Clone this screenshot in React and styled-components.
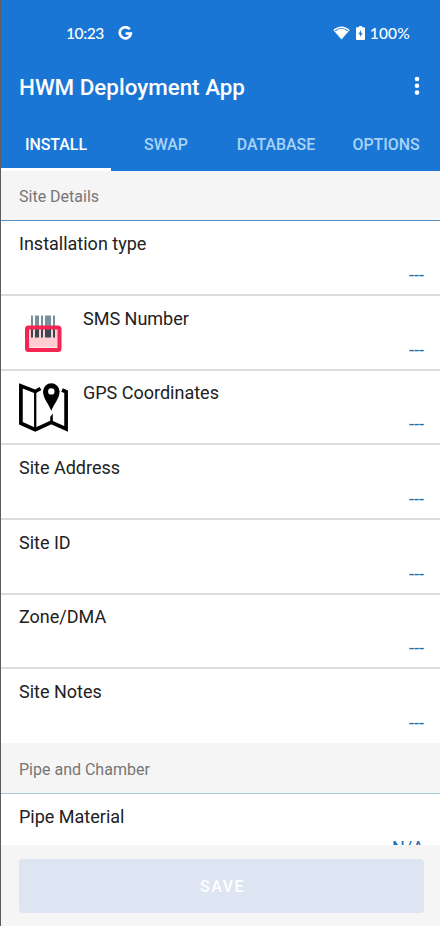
import React from 'react';
import styled, { createGlobalStyle } from 'styled-components';

const GlobalStyle = createGlobalStyle`
    * {
        box-sizing: border-box;
    }

    body {
        margin: 0;
        background: #f5f5f5;
        font-family: Roboto, sans-serif;
    }
`;

const Screen = styled.div`
    display: flex;
    flex-direction: column;
    width: 440px;
    height: 926px;
    overflow: hidden;
    background: #f5f5f5;
    border-left: 1px solid #5a5c60;
`;

const Header = styled.header`
    flex: none;
    height: 171px;
    background: #1976d5;
    color: #fff;
`;

const StatusBar = styled.div`
    display: flex;
    align-items: center;
    height: 66px;
    padding: 0 30px 0 65px;
    font-family: Lato, sans-serif;
    font-size: 15.5px;
    font-weight: 500;

    svg {
        display: block;
    }
`;

const Clock = styled.span`
    width: 52px;
    letter-spacing: -0.4px;
`;

const StatusIcons = styled.div`
    display: flex;
    align-items: center;
    gap: 6px;
    margin-left: auto;
`;

const Battery = styled.span`
    display: flex;
    align-items: center;
    gap: 5px;
    letter-spacing: 0.2px;
`;

const TitleBar = styled.div`
    display: flex;
    align-items: center;
    justify-content: space-between;
    height: 42px;
    padding: 0 20px 0 18px;
`;

const Title = styled.h1`
    margin: 0;
    font-size: 22.4px;
    font-weight: 500;
`;

const MenuButton = styled.button`
    display: flex;
    padding: 0 0 2px;
    border: none;
    background: none;
    color: inherit;
`;

const Tabs = styled.nav`
    display: grid;
    grid-template-columns: repeat(4, 110px);
    height: 63px;
`;

const Tab = styled.button`
    padding: 13px 0 0;
    border: none;
    border-bottom: 3px solid ${(props) => (props.$active ? '#fff' : 'transparent')};
    background: none;
    color: ${(props) => (props.$active ? '#fff' : '#a9d3f6')};
    font-family: inherit;
    font-size: 15.9px;
    font-weight: 500;
    white-space: nowrap;
`;

const Content = styled.main`
    flex: 1;
    min-height: 0;
    overflow: hidden;
`;

const SectionTitle = styled.h2`
    display: flex;
    align-items: center;
    height: 50px;
    margin: 0;
    padding: 2px 18px 0;
    border-bottom: 1px solid ${(props) => props.$line};
    color: #757575;
    font-size: 16px;
    font-weight: 400;

    section + section > & {
        height: 51px;
        padding-top: 3px;
    }
`;

const Row = styled.div`
    display: flex;
    height: 74.6px;
    padding: 0 16px 0 18px;
    border-bottom: 2px solid #dcdcdc;
    background: #fff;

    &:first-of-type {
        height: 75.3px;
    }

    &:last-of-type {
        height: 73.7px;
        border-bottom: none;
    }
`;

const RowIcon = styled.div`
    width: 64px;
    padding-top: 12px;
`;

const RowBody = styled.div`
    display: flex;
    flex: 1;
    flex-direction: column;
    gap: 9px;
    padding-top: 11.6px;
`;

const Label = styled.span`
    color: #212121;
    font-size: 18px;
    line-height: 22px;
`;

const Value = styled.span`
    align-self: flex-end;
    color: #1b6cab;
    font-size: 18px;
    line-height: 22px;
`;

const Footer = styled.footer`
    flex: none;
    height: 81px;
    padding: 14px 16px 13px 18px;
    background: #f5f5f5;
`;

const SaveButton = styled.button`
    width: 100%;
    height: 54px;
    padding: 1px 0 0 2px;
    border: none;
    border-radius: 4px;
    background: #dce5f1;
    color: #fff;
    font-family: inherit;
    font-size: 16px;
    font-weight: 500;
    letter-spacing: 1.5px;
`;

const GoogleIcon = () => (
    <svg width="15" height="15" viewBox="0 0 15 15" fill="none" stroke="#fff" strokeWidth="2.6">
        <path d="M11.800 3.300A5.600 5.600 0 1 0 12.900 7.500H7.600" />
    </svg>
);

const WifiIcon = () => (
    <svg width="17" height="14" viewBox="0 0 17 14">
        <path d="M.3 4C5-.7 12-.7 16.700 4L8.500 13.500Z" fill="#fff" />
        <path d="M2.200 4.900C6 1.700 11 1.700 14.800 4.900" fill="none" stroke="#1976d5" strokeWidth="1.200" />
    </svg>
);

const BatteryIcon = () => (
    <svg width="9" height="14" viewBox="0 0 9 14">
        <path d="M3 0H6V1.300H8Q9 1.300 9 2.300V13Q9 14 8 14H1Q0 14 0 13V2.300Q0 1.300 1 1.300H3Z" fill="#fff" />
        <path d="M5 4L2.500 8.300H4.100V11L6.600 7H5Z" fill="#1976d5" />
    </svg>
);

const MoreIcon = () => (
    <svg width="6" height="20" viewBox="0 0 6 20" fill="currentColor">
        <circle cx="3" cy="3" r="2.300" />
        <circle cx="3" cy="9.800" r="2.300" />
        <circle cx="3" cy="16.600" r="2.300" />
    </svg>
);

const BarcodeIcon = () => (
    <svg width="50" height="50" viewBox="0 0.5 50 50">
        <rect x="8" y="20" width="33" height="20" fill="#ffcdd2" />
        <path d="M12 8h2v13h-2zM16 8h4v13h-4zM22 8h2v13h-2zM26 8h6v13h-6zM34 8h2v13h-2z" fill="#78909c" />
        <path d="M12 20h2v10h-2zM16 20h4v10h-4zM22 20h2v10h-2zM26 20h6v10h-6zM34 20h2v10h-2z" fill="#37474f" />
        <rect x="8" y="20" width="32.500" height="22.500" rx="1.500" fill="none" stroke="#f52552" strokeWidth="4" />
    </svg>
);

const MapIcon = () => (
    <svg width="50" height="50" viewBox="0 0 50 50">
        <path
            d="M21.500 5.500L16.200 8.500L1.900 2.900V40.300L16.200 46.800L32.300 39.300L47.100 46V8.800L43 7"
            fill="none"
            stroke="#000"
            strokeWidth="3.700"
        />
        <path d="M16.200 8V47" fill="none" stroke="#000" strokeWidth="2.300" />
        <path d="M31.200 34L33.800 30.500V40H31.200Z" />
        <path
            fillRule="evenodd"
            d="M32.300 28C30.500 22 24 15.500 24 8.500A8.300 8.300 0 0 1 40.600 8.500C40.600 15.500 34.100 22 32.300 28ZM32.300 5.200A3.200 3.200 0 1 0 32.300 11.600A3.200 3.200 0 1 0 32.300 5.200Z"
        />
    </svg>
);

const tabs = ['INSTALL', 'SWAP', 'DATABASE', 'OPTIONS'];

const siteDetails = [
    { label: 'Installation type' },
    { label: 'SMS Number', icon: <BarcodeIcon /> },
    { label: 'GPS Coordinates', icon: <MapIcon /> },
    { label: 'Site Address' },
    { label: 'Site ID' },
    { label: 'Zone/DMA' },
    { label: 'Site Notes' },
];

const Field = ({ label, icon, value = '---' }) => (
    <Row>
        {icon && <RowIcon>{icon}</RowIcon>}
        <RowBody>
            <Label>{label}</Label>
            <Value>{value}</Value>
        </RowBody>
    </Row>
);

const App = () => {
    return (
        <>
            <GlobalStyle />
            <Screen>
                <Header>
                    <StatusBar>
                        <Clock>10:23</Clock>
                        <GoogleIcon />
                        <StatusIcons>
                            <WifiIcon />
                            <Battery>
                                <BatteryIcon />
                                100%
                            </Battery>
                        </StatusIcons>
                    </StatusBar>
                    <TitleBar>
                        <Title>HWM Deployment App</Title>
                        <MenuButton aria-label="Menu">
                            <MoreIcon />
                        </MenuButton>
                    </TitleBar>
                    <Tabs>
                        {tabs.map((tab, index) => (
                            <Tab key={tab} $active={index === 0}>
                                {tab}
                            </Tab>
                        ))}
                    </Tabs>
                </Header>

                <Content>
                    <section>
                        <SectionTitle $line="#5590c8">Site Details</SectionTitle>
                        {siteDetails.map((field) => (
                            <Field key={field.label} {...field} />
                        ))}
                    </section>
                    <section>
                        <SectionTitle $line="#a9cbd9">Pipe and Chamber</SectionTitle>
                        <Field label="Pipe Material" value="N/A" />
                    </section>
                </Content>

                <Footer>
                    <SaveButton>SAVE</SaveButton>
                </Footer>
            </Screen>
        </>
    );
};

export default App;
